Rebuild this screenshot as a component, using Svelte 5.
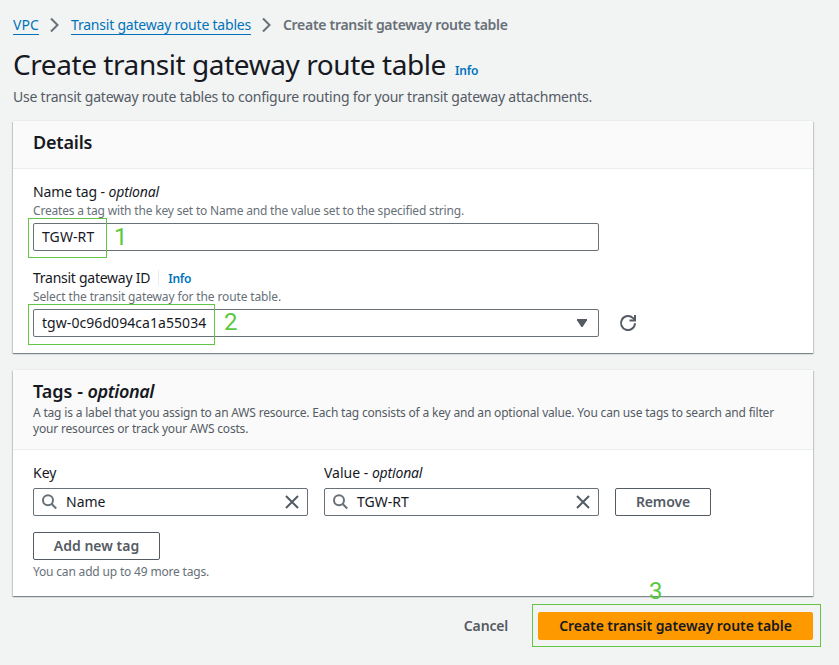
<script>
  let nameTag = $state('TGW-RT');
  let gatewayId = $state('tgw-0c96d094ca1a55034');
  let tag = $state({ key: 'Name', value: 'TGW-RT' });
</script>

{#snippet chevron()}
  <svg class="chevron" width="16" height="16" viewBox="0 0 16 16" aria-hidden="true">
    <path d="M4 1.5 10.5 8 4 14.5" />
  </svg>
{/snippet}

{#snippet searchBox(text)}
  <div class="field search">
    <svg class="lens" width="16" height="16" viewBox="0 0 16 16" aria-hidden="true">
      <circle cx="6" cy="6.3" r="5" />
      <path d="m9.7 10 4.5 4.5" />
    </svg>
    <span class="short">{text}</span>
    <svg class="clear" width="16" height="16" viewBox="0 0 16 16" aria-hidden="true">
      <path d="m2 2 12 12M14 2 2 14" />
    </svg>
  </div>
{/snippet}

<main>
  <nav>
    <a class="vpc" href="#vpc">VPC</a>
    {@render chevron()}
    <a href="#tables">Transit gateway route tables</a>
    {@render chevron()}
    <span class="current">Create transit gateway route table</span>
  </nav>

  <header class="page-head">
    <h1>Create transit gateway route table</h1>
    <a class="info" href="#info">Info</a>
  </header>
  <p class="lead">Use transit gateway route tables to configure routing for your transit gateway attachments.</p>

  <section class="card">
    <div class="card-head"><h2>Details</h2></div>
    <div class="card-body">
      <div class="label">Name tag - <em>optional</em></div>
      <div class="hint">Creates a tag with the key set to Name and the value set to the specified string.</div>
      <div class="field wide"><span class="short">{nameTag}</span></div>

      <div class="label second">
        <span class="gateway">Transit gateway ID</span>
        <a class="info divided" href="#gateway-info">Info</a>
      </div>
      <div class="hint choose">Select the transit gateway for the route table.</div>
      <div class="row">
        <div class="field wide">
          <span class="id">{gatewayId}</span>
          <svg class="caret" width="16" height="16" viewBox="0 0 16 16" aria-hidden="true">
            <path d="M3 4h10v1.2L8.6 12H7.4L3 5.2z" />
          </svg>
        </div>
        <svg class="refresh" width="18" height="18" viewBox="0 0 18 18" aria-hidden="true">
          <path d="M16 9.2a7 7 0 1 1-2-5.1l2 1.7" />
          <path d="M16 1v5.5h-5.5" />
        </svg>
      </div>
    </div>
  </section>

  <section class="card tags">
    <div class="card-head">
      <h2>Tags - <em>optional</em></h2>
      <p>A tag is a label that you assign to an AWS resource. Each tag consists of a key and an optional value. You can use tags to search and filter<br />your resources or track your AWS costs.</p>
    </div>
    <div class="card-body">
      <div class="tag-row">
        <div class="column">
          <div class="column-label">Key</div>
          {@render searchBox(tag.key)}
        </div>
        <div class="column">
          <div class="column-label">Value - <em>optional</em></div>
          {@render searchBox(tag.value)}
        </div>
        <button class="remove">Remove</button>
      </div>
      <button class="add">Add new tag</button>
      <div class="hint remaining">You can add up to 49 more tags.</div>
    </div>
  </section>

  <footer>
    <button class="cancel">Cancel</button>
    <button class="primary">Create transit gateway route table</button>
  </footer>

  <div class="mark one"></div>
  <div class="mark two"></div>
  <div class="mark three"></div>
  <span class="step s1">1</span>
  <span class="step s2">2</span>
  <span class="step s3">3</span>
</main>

<style>
  :global(body) { background: #f2f3f3; }
  main {
    position: relative;
    box-sizing: border-box;
    width: 839px;
    height: 665px;
    padding: 14px 26px 0 13px;
    overflow: hidden;
    background: #f2f3f3;
    color: #16191f;
    font: 14px/22px "Noto Sans", sans-serif;
  }
  h1, h2, p { margin: 0; font-weight: 400; }
  a { color: #0073bb; text-decoration: none; }
  svg { flex: none; fill: none; stroke: #545b64; stroke-width: 2; }
  nav { display: flex; align-items: center; height: 22px; }
  nav a {
    height: 20px;
    margin-bottom: 1px;
    line-height: 22px;
    border-bottom: 1px solid #0073bb;
    letter-spacing: -0.21px;
    white-space: nowrap;
  }
  nav a.vpc { letter-spacing: 0.1px; }
  .chevron { margin: 0 8px; stroke: #687078; }
  .current { color: #687078; font-weight: 600; letter-spacing: -0.3px; white-space: nowrap; }
  .page-head { display: flex; align-items: baseline; height: 36px; margin-top: 10px; }
  h1 { font-size: 28px; line-height: 36px; letter-spacing: -0.43px; }
  .info { font-size: 12px; font-weight: 600; letter-spacing: -0.2px; }
  .page-head .info { margin-left: 9px; }
  .lead { margin-top: 4px; color: #545b64; letter-spacing: -0.225px; white-space: nowrap; }
  .card {
    width: 800px;
    margin-top: 13px;
    background: #fff;
    box-shadow: 0 1px 1px 0 rgba(0, 28, 36, 0.3), 1px 1px 1px 0 rgba(0, 28, 36, 0.15),
      -1px 1px 1px 0 rgba(0, 28, 36, 0.15), 0 -1px 0 0 #eaeded;
  }
  .card.tags { margin-top: 17px; }
  .card-head {
    box-sizing: border-box;
    height: 48px;
    padding: 10px 20px 0;
    border-bottom: 1px solid #eaeded;
    background: #fafafa;
  }
  .tags .card-head { height: 80px; }
  h2 { font-size: 18px; line-height: 22px; font-weight: 600; letter-spacing: -0.2px; }
  .tags h2 { letter-spacing: 0; }
  h2 em { letter-spacing: -0.4px; }
  .card-head p {
    margin-top: 3px;
    color: #545b64;
    font-size: 12px;
    line-height: 16px;
    letter-spacing: -0.182px;
    white-space: nowrap;
  }
  .card-body { padding: 12px 20px 16px; }
  .label { display: flex; height: 21px; letter-spacing: -0.08px; white-space: pre; }
  .label.second { margin-top: 16px; }
  .gateway { letter-spacing: -0.26px; }
  em { letter-spacing: -0.18px; }
  .divided { height: 16px; margin: 3px 0 0 8px; padding-left: 9px; border-left: 1px solid #eaeded; line-height: 17px; }
  .hint {
    box-sizing: border-box;
    height: 21px;
    padding-top: 1px;
    color: #687078;
    font-size: 12px;
    line-height: 16px;
    letter-spacing: -0.176px;
    white-space: nowrap;
  }
  .hint.choose { letter-spacing: -0.13px; }
  .field {
    box-sizing: border-box;
    display: flex;
    align-items: center;
    justify-content: space-between;
    height: 28px;
    padding: 0 8px;
    border: 1px solid #687078;
    border-radius: 2px;
    background: #fff;
  }
  .wide { width: 566px; }
  .short { letter-spacing: 0.1px; }
  .search .short { letter-spacing: 0; }
  .id { letter-spacing: 0.06px; }
  .caret { fill: #545b64; stroke: none; }
  .row { display: flex; align-items: center; }
  .refresh { margin-left: 20px; }
  .tag-row { display: flex; align-items: flex-end; gap: 16px; }
  .column { width: 275px; }
  .column-label { height: 26px; }
  .search { justify-content: flex-start; padding: 0 7px 0 8px; }
  .search .short { flex: 1; margin-left: 8px; }
  .lens { stroke: #687078; }
  button {
    box-sizing: border-box;
    height: 28px;
    padding: 0;
    border: 1px solid #545b64;
    border-radius: 2px;
    background: #fff;
    color: #545b64;
    font: 600 14px/20px "Noto Sans", sans-serif;
    white-space: nowrap;
  }
  .remove { width: 96px; letter-spacing: -0.1px; }
  .add { display: block; width: 127px; margin-top: 16px; }
  .remaining { height: 16px; margin-top: 4px; padding-top: 0; }
  footer { display: flex; justify-content: flex-end; margin-top: 16px; }
  .cancel { width: 86px; margin-right: 9px; border: 0; background: none; letter-spacing: -0.15px; }
  .primary { width: 275px; border-color: #f90; background: #f90; color: #16191f; letter-spacing: -0.06px; }
  .mark { position: absolute; box-sizing: border-box; border: 1px solid #62c546; }
  .one { left: 28px; top: 218px; width: 79px; height: 40px; }
  .two { left: 28px; top: 304px; width: 187px; height: 41px; }
  .three { left: 532px; top: 604px; width: 289px; height: 43px; }
  .step { position: absolute; color: #5bc83f; font: 24px/24px Roboto, "Liberation Sans", sans-serif; }
  .s1 { left: 114px; top: 225px; }
  .s2 { left: 224px; top: 310px; }
  .s3 { left: 649px; top: 579px; }
</style>
